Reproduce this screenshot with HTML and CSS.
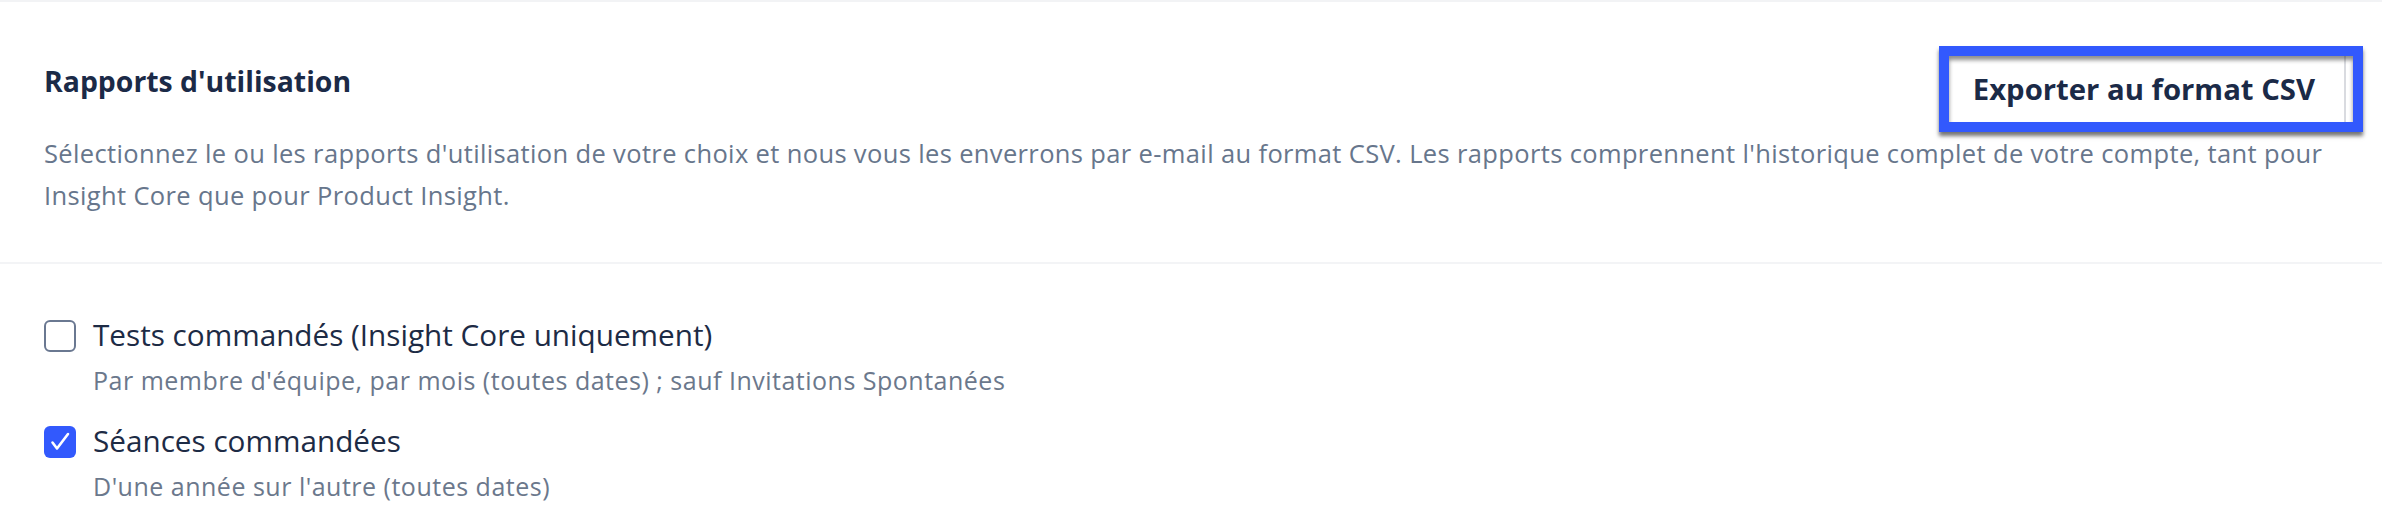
FILE: index.html
```html
<!DOCTYPE html>
<html lang="fr">
<head>
<meta charset="utf-8">
<title>Rapports d'utilisation</title>
<link rel="stylesheet" href="styles.css">
</head>
<body>
<div class="page">
  <section class="header">
    <div class="header-top">
      <h2 class="title">Rapports d'utilisation</h2>
      <button class="export" type="button">Exporter au format CSV</button>
    </div>
    <p class="desc">Sélectionnez le ou les rapports d'utilisation de votre choix et nous vous les enverrons par e-mail au format CSV. Les rapports comprennent l'historique complet de votre compte, tant pour Insight Core que pour Product Insight.</p>
  </section>
  <section class="list">
    <div class="item">
      <span class="box"></span>
      <div class="text">
        <div class="label">Tests commandés (Insight Core uniquement)</div>
        <div class="sub">Par membre d'équipe, par mois (toutes dates) ; sauf Invitations Spontanées</div>
      </div>
    </div>
    <div class="item">
      <span class="box checked">
        <svg viewBox="0 0 32 32" width="32" height="32"><path d="M8.5 16.5 L13 22.5 L24 8" fill="none" stroke="#fff" stroke-width="2.6" stroke-linecap="round" stroke-linejoin="round"/></svg>
      </span>
      <div class="text">
        <div class="label">Séances commandées</div>
        <div class="sub">D'une année sur l'autre (toutes dates)</div>
      </div>
    </div>
  </section>
</div>
</body>
</html>
```
FILE: styles.css
```css
* { box-sizing: border-box; }
html, body { margin: 0; padding: 0; background: #fff; }
body { font-family: "Open Sans", Lato, "Liberation Sans", sans-serif; }

.page {
  border-top: 2px solid #f2f3f5;
}

.header {
  padding: 44px 19px 46px 44px;
  border-bottom: 2px solid #f3f4f6;
}

.header-top {
  display: flex;
  justify-content: space-between;
  align-items: flex-start;
}

.title {
  margin: 17px 0 0 0;
  font-size: 28.4px;
  line-height: 36px;
  font-weight: 700;
  color: #1b2a47;
}

.export {
  height: 86px;
  padding: 0 38px 0 24px;
  border: 10px solid #3259fd;
  background: #fff;
  font-family: inherit;
  font-size: 29.3px;
  font-weight: 700;
  color: #1b2a47;
  box-shadow: 0 4px 4px rgba(0, 0, 0, 0.55),
              inset 0 4px 4px rgba(0, 0, 0, 0.45),
              inset -7px 0 0 #fff,
              inset -9px 0 0 #d9dbe0;
}

.desc {
  margin: 0;
  padding-right: 25px;
  font-size: 25.5px;
  letter-spacing: 0.36px;
  line-height: 42px;
  color: #67768c;
}

.list {
  padding: 53px 44px 20px 44px;
  display: flex;
  flex-direction: column;
  gap: 25px;
}

.item {
  display: flex;
  align-items: flex-start;
  gap: 17px;
}

.box {
  flex: none;
  width: 32px;
  height: 32px;
  margin-top: 3px;
  border: 2px solid #6a7891;
  border-radius: 6px;
  display: flex;
}

.box.checked {
  border: none;
  background: #3259fd;
}

.label {
  font-size: 29.7px;
  line-height: 36px;
  color: #1d2b45;
}

.sub {
  margin-top: 9px;
  font-size: 25px;
  letter-spacing: 0.5px;
  line-height: 36px;
  color: #6b788c;
}
```
